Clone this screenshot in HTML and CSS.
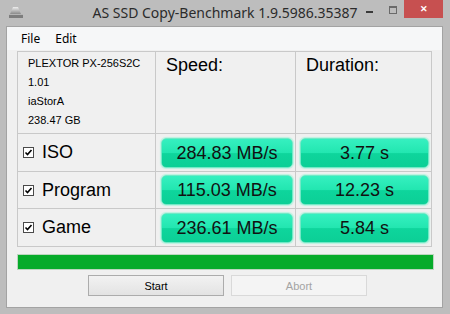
FILE: index.html
```html
<!DOCTYPE html>
<html lang="en">
<head>
    <meta charset="UTF-8">
    <meta name="viewport" content="width=device-width, initial-scale=1.0">
    <title>AS SSD Copy-Benchmark</title>
    <link rel="stylesheet" href="styles.css">
</head>
<body>
    <div class="window">
        <div class="titlebar">
            <svg class="app-icon" width="16" height="13" viewBox="0 0 16 13">
                <defs>
                    <linearGradient id="dome" x1="0" y1="0" x2="0" y2="1">
                        <stop offset="0" stop-color="#eeeeee"/>
                        <stop offset="1" stop-color="#8a8a8a"/>
                    </linearGradient>
                </defs>
                <path d="M5 1 L10 1 L13 8 L2 8 Z" fill="url(#dome)"/>
                <rect x="1" y="8" width="14" height="4" fill="#7d7d7d"/>
                <rect x="1" y="8" width="14" height="1" fill="#b5b5b5"/>
            </svg>
            <div class="title">AS SSD Copy-Benchmark 1.9.5986.35387</div>
            <div class="controls">
                <span class="btn-min"></span>
                <span class="btn-max"></span>
                <span class="btn-close">&#x2715;</span>
            </div>
        </div>
        <div class="client">
            <div class="menubar">
                <span class="menu-item">File</span>
                <span class="menu-item">Edit</span>
            </div>
            <div class="content">
                <div class="result-grid">
                    <div class="cell drive-info">
                        <div>PLEXTOR PX-256S2C</div>
                        <div>1.01</div>
                        <div>iaStorA</div>
                        <div>238.47 GB</div>
                    </div>
                    <div class="cell head">Speed:</div>
                    <div class="cell head">Duration:</div>

                    <div class="cell label"><span class="check"></span>ISO</div>
                    <div class="cell value speed"><span class="pill">284.83 MB/s</span></div>
                    <div class="cell value"><span class="pill">3.77 s</span></div>

                    <div class="cell label"><span class="check"></span>Program</div>
                    <div class="cell value speed"><span class="pill">115.03 MB/s</span></div>
                    <div class="cell value"><span class="pill">12.23 s</span></div>

                    <div class="cell label"><span class="check"></span>Game</div>
                    <div class="cell value speed"><span class="pill">236.61 MB/s</span></div>
                    <div class="cell value"><span class="pill">5.84 s</span></div>
                </div>
                <div class="progress"><div class="progress-fill"></div></div>
                <div class="actions">
                    <button class="win-button">Start</button>
                    <button class="win-button" disabled>Abort</button>
                </div>
            </div>
        </div>
    </div>
</body>
</html>
```

FILE: styles.css
```css
body {
    margin: 0;
    background-color: #bdbdbd;
    font-family: 'Liberation Sans', Arial, sans-serif;
}
.window {
    width: 450px;
    height: 314px;
    background-color: #bdbdbd;
    overflow: hidden;
}
.titlebar {
    height: 26px;
    display: grid;
    grid-template-columns: 1fr auto 1fr;
    align-items: start;
}
.app-icon {
    margin: 6px 0 0 8px;
}
.title {
    font-family: 'Noto Sans', 'Open Sans', sans-serif;
    font-size: 14px;
    color: #2b2b2b;
    line-height: 26px;
    white-space: nowrap;
}
.controls {
    justify-self: end;
    display: flex;
    align-items: flex-start;
    margin-right: 7px;
}
.btn-min {
    width: 7px;
    height: 2px;
    background-color: #3a3a3a;
    margin: 11px 16px 0 0;
}
.btn-max {
    width: 6px;
    height: 5px;
    border: 1px solid #6a6a6a;
    border-top-width: 2px;
    margin: 6px 7px 0 0;
}
.btn-close {
    width: 39px;
    height: 18px;
    background-color: #c75050;
    color: #ffffff;
    font-size: 9px;
    font-weight: bold;
    line-height: 18px;
    text-align: center;
}
.client {
    margin-left: 6px;
    width: 435px;
    height: 280px;
    border: 1px solid #a3a3a3;
    background-color: #f0f0f0;
}
.menubar {
    height: 23px;
    background-color: #f6f7f8;
    display: flex;
    gap: 15px;
    padding-left: 14px;
    font-family: 'Noto Sans', 'Open Sans', sans-serif;
    font-size: 12px;
    line-height: 23px;
    color: #000;
}
.content {
    padding: 1px 0 0 10px;
}
.result-grid {
    display: grid;
    grid-template-columns: 137px 139px 135px;
    grid-template-rows: 81px 37px 36px 37px;
    gap: 1px;
    width: 413px;
    background-color: #c9c9c9;
    border: 1px solid #c9c9c9;
}
.cell {
    background-color: #f0f0f0;
}
.drive-info {
    font-size: 11px;
    line-height: 19px;
    padding: 2px 0 0 10px;
    color: #000;
}
.head {
    font-size: 18px;
    padding: 3px 0 0 10px;
    color: #000;
}
.head:last-of-type {
    padding-left: 9px;
}
.label {
    display: flex;
    align-items: center;
    font-size: 18px;
    padding-left: 5px;
    color: #000;
}
.check {
    width: 9px;
    height: 9px;
    border: 1px solid #4a4a4a;
    background: #ffffff url("data:image/svg+xml;utf8,<svg xmlns='http://www.w3.org/2000/svg' width='9' height='9'><path d='M1.5 4.5 L3.5 6.5 L7.5 2' stroke='black' stroke-width='1.6' fill='none'/></svg>") no-repeat center;
    margin-right: 8px;
}
.value {
    display: flex;
    align-items: center;
    padding: 0 2px 0 4px;
}
.value.speed {
    padding-left: 5px;
}
.pill {
    flex: 1;
    height: 28px;
    border: 1px solid #73e8c6;
    border-radius: 5px;
    background: linear-gradient(#36f0c0, #22e6b0 50%, #0ed59c 52%, #0ccf96);
    box-shadow: 0 0 1px 1px #b8f3e0;
    font-size: 18px;
    line-height: 28px;
    text-align: center;
    color: #111;
}
.progress {
    width: 415px;
    height: 14px;
    margin-top: 7px;
    border: 1px solid #bcd6bf;
    background-color: #06ab2a;
}
.actions {
    display: flex;
    gap: 7px;
    margin-top: 5px;
    padding-left: 71px;
}
.win-button {
    width: 136px;
    height: 21px;
    padding: 0;
    border: 1px solid #acacac;
    background: linear-gradient(#f2f2f2, #e3e3e3);
    font-family: 'Liberation Sans', Arial, sans-serif;
    font-size: 11px;
    color: #000;
}
.win-button:disabled {
    border-color: #d9d9d9;
    background: #f4f4f4;
    color: #a3a3a3;
}
```
